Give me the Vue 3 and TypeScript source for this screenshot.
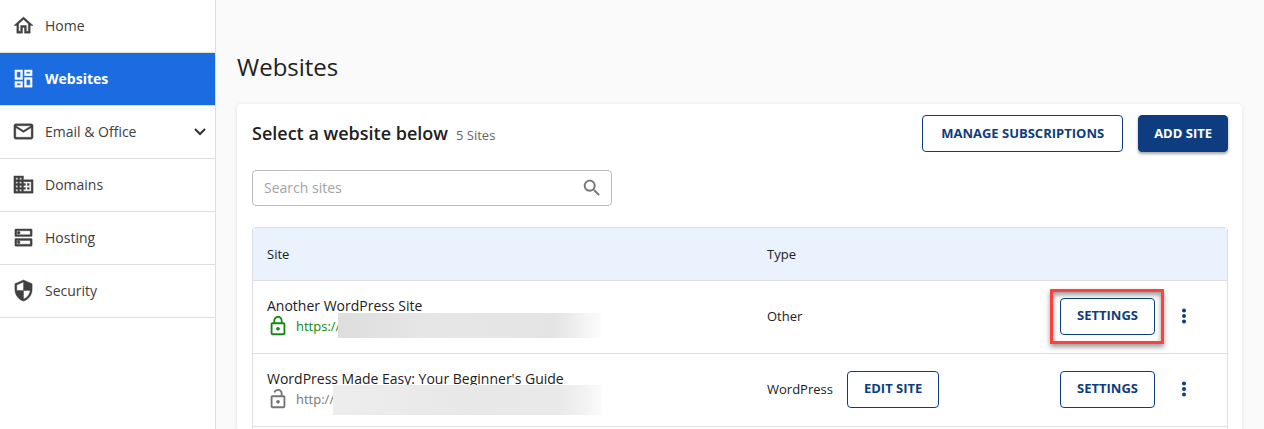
<script setup lang="ts">
import { ref } from 'vue'

interface NavItem {
  label: string
  icon: string
  active?: boolean
  expandable?: boolean
}

interface Site {
  name: string
  scheme: string
  secure: boolean
  type: string
  editable: boolean
  highlighted: boolean
}

const icons: Record<string, string> = {
  home: 'M12 5.69l5 4.5V18h-2v-6H9v6H7v-7.81l5-4.5M12 3L2 12h3v8h6v-6h2v6h6v-8h3L12 3z',
  dashboard:
    'M19 5v2h-4V5h4M9 5v6H5V5h4m10 8v6h-4v-6h4M9 17v2H5v-2h4M21 3h-8v6h8V3zM11 3H3v10h8V3zm10 8h-8v10h8V11zm-10 4H3v6h8v-6z',
  mail: 'M22 6c0-1.100-.9-2-2-2H4c-1.100 0-2 .9-2 2v12c0 1.100.9 2 2 2h16c1.100 0 2-.9 2-2V6zm-2 0l-8 5-8-5h16zm0 12H4V8l8 5 8-5v10z',
  domain:
    'M12 7V3H2v18h20V7H12zM6 19H4v-2h2v2zm0-4H4v-2h2v2zm0-4H4V9h2v2zm0-4H4V5h2v2zm4 12H8v-2h2v2zm0-4H8v-2h2v2zm0-4H8V9h2v2zm0-4H8V5h2v2zm10 12h-8v-2h2v-2h-2v-2h2v-2h-2V9h8v10zm-2-8h-2v2h2v-2zm0 4h-2v2h2v-2z',
  hosting:
    'M19 15v4H5v-4h14m1-2H4c-.55 0-1 .45-1 1v6c0 .55.45 1 1 1h16c.55 0 1-.45 1-1v-6c0-.55-.45-1-1-1zM7 18.500c-.82 0-1.500-.67-1.500-1.500s.68-1.500 1.500-1.500 1.500.67 1.500 1.500-.67 1.500-1.500 1.500zM19 5v4H5V5h14m1-2H4c-.55 0-1 .45-1 1v6c0 .55.45 1 1 1h16c.55 0 1-.45 1-1V4c0-.55-.45-1-1-1zM7 8.500c-.82 0-1.500-.67-1.500-1.500S6.180 5.500 7 5.500s1.500.68 1.500 1.500S7.830 8.500 7 8.500z',
  security:
    'M12 1L3 5v6c0 5.550 3.840 10.740 9 12 5.160-1.260 9-6.450 9-12V5l-9-4zm0 10.990h7c-.53 4.120-3.280 7.790-7 8.940V12H5V6.300l7-3.110v8.800z',
  lock: 'M12 17c1.100 0 2-.9 2-2s-.9-2-2-2-2 .9-2 2 .9 2 2 2zm6-9h-1V6c0-2.760-2.240-5-5-5S7 3.240 7 6v2H6c-1.100 0-2 .9-2 2v10c0 1.100.9 2 2 2h12c1.100 0 2-.9 2-2V10c0-1.100-.9-2-2-2zM8.900 6c0-1.710 1.390-3.100 3.100-3.100s3.100 1.390 3.100 3.100v2H8.900V6zM18 20H6V10h12v10z',
  unlock:
    'M12 17c1.100 0 2-.9 2-2s-.9-2-2-2-2 .9-2 2 .9 2 2 2zm6-9h-1V6c0-2.760-2.240-5-5-5-2.280 0-4.270 1.540-4.840 3.750l1.940.49C9.440 3.930 10.630 3 12 3c1.650 0 3 1.350 3 3v2H6c-1.100 0-2 .9-2 2v10c0 1.100.9 2 2 2h12c1.100 0 2-.9 2-2V10c0-1.100-.9-2-2-2zm0 12H6V10h12v10z',
}

const nav: NavItem[] = [
  { label: 'Home', icon: 'home' },
  { label: 'Websites', icon: 'dashboard', active: true },
  { label: 'Email & Office', icon: 'mail', expandable: true },
  { label: 'Domains', icon: 'domain' },
  { label: 'Hosting', icon: 'hosting' },
  { label: 'Security', icon: 'security' },
]

const sites: Site[] = [
  { name: 'Another WordPress Site', scheme: 'https://', secure: true, type: 'Other', editable: false, highlighted: true },
  { name: "WordPress Made Easy: Your Beginner's Guide", scheme: 'http://', secure: false, type: 'WordPress', editable: true, highlighted: false },
]

const query = ref('')
</script>

<template>
  <div class="layout">
    <nav class="sidebar" aria-label="Main">
      <a
        v-for="item in nav"
        :key="item.label"
        href="#"
        class="nav-item"
        :class="{ active: item.active }"
        :aria-current="item.active ? 'page' : undefined"
      >
        <svg class="nav-icon" viewBox="0 0 24 24" aria-hidden="true"><path :d="icons[item.icon]" /></svg>
        <span class="nav-label">{{ item.label }}</span>
        <svg v-if="item.expandable" class="chevron" viewBox="0 0 12 12" aria-hidden="true">
          <path d="M1 3l5 5 5-5" />
        </svg>
      </a>
    </nav>

    <main class="main">
      <h1>Websites</h1>
      <section class="card">
        <header class="card-head">
          <div class="heading">
            <h2>Select a website below</h2>
            <span class="count">5 Sites</span>
          </div>
          <div class="head-actions">
            <button type="button" class="btn wide">MANAGE SUBSCRIPTIONS</button>
            <button type="button" class="btn primary">ADD SITE</button>
          </div>
        </header>

        <div class="search">
          <input v-model="query" type="text" placeholder="Search sites" aria-label="Search sites" />
          <svg viewBox="0 0 24 24" aria-hidden="true">
            <path
              d="M15.500 14h-.79l-.28-.27C15.410 12.590 16 11.110 16 9.500 16 5.910 13.090 3 9.500 3S3 5.910 3 9.500 5.910 16 9.500 16c1.610 0 3.090-.59 4.230-1.570l.27.28v.79l5 4.990L20.490 19l-4.990-5zm-6 0C7.010 14 5 11.990 5 9.500S7.010 5 9.500 5 14 7.010 14 9.500 11.990 14 9.500 14z"
            />
          </svg>
        </div>

        <div class="table-box">
          <table>
            <colgroup>
              <col class="col-site" />
              <col />
              <col class="col-actions" />
            </colgroup>
            <thead>
              <tr>
                <th scope="col">Site</th>
                <th scope="col">Type</th>
                <th aria-label="Actions"></th>
              </tr>
            </thead>
            <tbody>
              <tr v-for="site in sites" :key="site.name">
                <td>
                  <div class="site-name">{{ site.name }}</div>
                  <div class="site-url" :class="{ secure: site.secure }">
                    <svg viewBox="0 0 24 24" aria-hidden="true">
                      <path :d="site.secure ? icons.lock : icons.unlock" />
                    </svg>
                    <a href="#">{{ site.scheme }}<span class="redacted"></span></a>
                  </div>
                </td>
                <td>
                  <div class="type">
                    <span>{{ site.type }}</span>
                    <button v-if="site.editable" type="button" class="btn">EDIT SITE</button>
                  </div>
                </td>
                <td>
                  <div class="row-actions">
                    <div class="settings" :class="{ highlighted: site.highlighted }">
                      <button type="button" class="btn">SETTINGS</button>
                    </div>
                    <button type="button" class="more" aria-label="More options">
                      <svg viewBox="0 0 24 24" aria-hidden="true">
                        <circle cx="12" cy="5.500" r="2.400" />
                        <circle cx="12" cy="12" r="2.400" />
                        <circle cx="12" cy="18.500" r="2.400" />
                      </svg>
                    </button>
                  </div>
                </td>
              </tr>
            </tbody>
          </table>
        </div>
      </section>
    </main>
  </div>
</template>

<style>
body {
  margin: 0;
  background: #fafafa;
  overflow: hidden;
}
</style>

<style scoped>
.layout,
.layout * {
  box-sizing: border-box;
}
.layout {
  display: flex;
  min-height: 100vh;
  font-family: "Open Sans", "Noto Sans", sans-serif;
  font-size: 13px;
  color: #212121;
}
.sidebar {
  flex: 0 0 216px;
  background: #fff;
  border-right: 1px solid #dedede;
}
.nav-item {
  display: flex;
  align-items: center;
  height: 53px;
  padding: 0 9px 1px 12px;
  border-bottom: 1px solid #dedede;
  color: #404040;
  font-size: 14px;
  text-decoration: none;
}
.nav-item.active {
  background: #1a6ce0;
  background-clip: padding-box;
  color: #fff;
  font-weight: 700;
}
.nav-icon {
  width: 23px;
  height: 23px;
  margin-right: 10px;
  fill: currentColor;
  stroke: currentColor;
  stroke-width: 0.4;
}
.nav-label {
  flex: 1;
}
.chevron {
  width: 12px;
  height: 12px;
  fill: none;
  stroke: #333;
  stroke-width: 2;
}
.main {
  flex: 1;
  min-width: 0;
  display: flex;
  flex-direction: column;
  padding: 50px 22px 0 21px;
}
h1 {
  margin: 0 0 20px;
  font-size: 24px;
  line-height: 34px;
  font-weight: 400;
}
.card {
  flex: 1;
  display: flex;
  flex-direction: column;
  padding: 11px 14px 0 15px;
  background: #fff;
  border-radius: 4px 4px 0 0;
  box-shadow: 0 1px 4px rgba(0, 0, 0, 0.12);
}
.card-head {
  display: flex;
  justify-content: space-between;
  align-items: center;
  margin-bottom: 18px;
}
.heading {
  display: flex;
  align-items: baseline;
  gap: 8px;
  padding-bottom: 2px;
}
h2 {
  margin: 0;
  font-size: 18px;
  line-height: 24px;
  font-weight: 600;
}
.count {
  color: #666;
}
.head-actions {
  display: flex;
  gap: 15px;
}
.btn {
  height: 37px;
  padding: 0 16px 2px;
  border: 1px solid #0d3d80;
  border-radius: 4px;
  background: #fff;
  color: #0d3d80;
  font: 700 13px "Open Sans", "Noto Sans", sans-serif;
  white-space: nowrap;
}
.btn.wide {
  padding: 0 18px 2px;
}
.btn.primary {
  padding: 0 15px 2px;
  background: #0d3d80;
  color: #fff;
  box-shadow: 0 2px 3px rgba(0, 0, 0, 0.35);
}
.search {
  display: flex;
  align-items: center;
  width: 360px;
  height: 36px;
  margin-bottom: 21px;
  padding: 0 8px 0 11px;
  border: 1px solid #bdbdbd;
  border-radius: 4px;
}
.search input {
  flex: 1;
  min-width: 0;
  padding: 0 0 2px;
  border: 0;
  outline: 0;
  background: none;
  color: #212121;
  font: 14px "Open Sans", "Noto Sans", sans-serif;
}
.search input::placeholder {
  color: #a3a3a3;
  opacity: 1;
}
.search svg {
  width: 22px;
  height: 22px;
  fill: #757575;
}
.table-box {
  flex: 1;
  border: 1px solid #dedede;
  border-bottom: 0;
  border-radius: 4px 4px 0 0;
}
table {
  width: 100%;
  table-layout: fixed;
  border-collapse: separate;
  border-spacing: 0;
}
.col-site {
  width: 500px;
}
.col-actions {
  width: 200px;
}
th,
td {
  padding: 0 14px;
  border-bottom: 1px solid #dedede;
  text-align: left;
}
th {
  height: 53px;
  background: #eaf2fd;
  font-weight: 400;
}
td {
  height: 73px;
  padding-bottom: 2px;
}
.site-name {
  font-size: 14px;
  line-height: 20px;
}
.site-url {
  display: flex;
  align-items: center;
  height: 20px;
  color: #757575;
}
.site-url.secure {
  color: #118811;
}
.site-url svg {
  width: 22px;
  height: 22px;
  margin-right: 7px;
  fill: currentColor;
}
.site-url a {
  position: relative;
  color: inherit;
  text-decoration: none;
}
.redacted {
  position: absolute;
  top: -5px;
  left: 100%;
  width: 269px;
  height: 30px;
  margin-left: -1px;
  background: linear-gradient(90deg, #ededed, #e8e8e8 50%, #e9e9e9 84%, #f3f3f3 94%, #fcfcfc);
}
.secure .redacted {
  top: -4px;
  width: 263px;
  height: 25px;
  margin-left: -2px;
  background: linear-gradient(90deg, #dedede, #e6e6e6 35%, #e4e4e4 82%, #f2f2f2 93%, #fcfcfc);
}
.type,
.row-actions {
  display: flex;
  align-items: center;
}
.type {
  gap: 14px;
}
.row-actions {
  justify-content: flex-end;
  gap: 17px;
  padding-right: 17px;
}
.settings {
  position: relative;
}
.highlighted::after {
  content: "";
  position: absolute;
  inset: -9px -9px -9px -10px;
  border: 3px solid #ff4040;
  box-shadow: 0 3px 5px rgba(0, 0, 0, 0.4), inset 0 3px 5px rgba(0, 0, 0, 0.4);
  pointer-events: none;
}
.more {
  width: 24px;
  height: 24px;
  padding: 2px;
  border: 0;
  background: none;
}
.more svg {
  display: block;
  width: 20px;
  height: 20px;
  fill: #0d3d80;
}
</style>
